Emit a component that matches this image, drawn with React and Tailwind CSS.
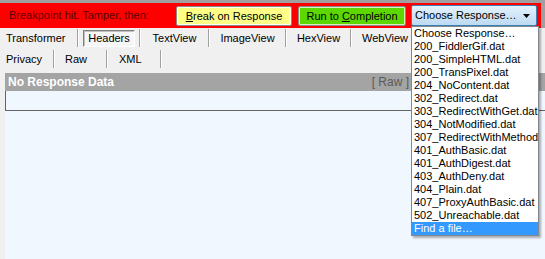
import { ChevronDown } from 'lucide-react';

const responses = [
  'Choose Response…',
  '200_FiddlerGif.dat',
  '200_SimpleHTML.dat',
  '200_TransPixel.dat',
  '204_NoContent.dat',
  '302_Redirect.dat',
  '303_RedirectWithGet.dat',
  '304_NotModified.dat',
  '307_RedirectWithMethod.dat',
  '401_AuthBasic.dat',
  '401_AuthDigest.dat',
  '403_AuthDeny.dat',
  '404_Plain.dat',
  '407_ProxyAuthBasic.dat',
  '502_Unreachable.dat',
];

const topTabs = [
  { label: 'Transformer', cls: 'w-[77px] pl-[6px] text-left' },
  { label: 'Headers', cls: 'w-[60px] text-center', active: true },
  { label: 'TextView', cls: 'w-[67px] text-center' },
  { label: 'ImageView', cls: 'w-[75px] text-center' },
  { label: 'HexView', cls: 'w-[63px] text-center' },
  { label: 'WebView', cls: 'w-[66px] text-center' },
];

const bottomTabs = [
  { label: 'Privacy', cls: 'w-[53px] pl-[6px]' },
  { label: 'Raw', cls: 'w-[51px] pl-[10px]' },
  { label: 'XML', cls: 'w-[52px] pl-[11px]' },
];

function Sep() {
  return <div className="w-[2px] self-stretch border-l border-[#a0a0a0] bg-white" />;
}

export default function App() {
  return (
    <div className="relative w-[545px] h-[259px] overflow-hidden bg-[#f0f0f0] font-['Liberation_Sans',Arial,sans-serif] text-[11px] text-black leading-none">
      {/* breakpoint bar */}
      <div className="bg-[#a0a0a0] pt-[3px] pr-[4px]">
        <div className="h-[25px] bg-[#ff0000] flex items-center">
          <span className="pl-[9px] w-[176px] text-[#5c0000]">Breakpoint hit. Tamper, then:</span>
          <button className="h-[20px] w-[116px] rounded-[2px] border border-[#8a8a8a] shadow-[inset_0_0_0_1px_#fffff0] bg-[#ffff88] text-center pt-[1px]">
            <span className="underline">B</span>reak on Response
          </button>
          <button className="ml-[6px] h-[20px] w-[108px] rounded-[2px] border border-[#8a8a8a] shadow-[inset_0_0_0_1px_#d8f0c0] bg-[#5cd800] text-center pt-[1px]">
            Run to <span className="underline">C</span>ompletion
          </button>
          <div className="ml-[5px] h-[21px] w-[126px] rounded-[2px] border border-[#3c7fb1] bg-gradient-to-b from-[#e4f2fc] to-[#bcdaf2] flex items-center pl-[3px] pr-[6px]">
            <span className="flex-1">Choose Response…</span>
            <svg width="7" height="4" viewBox="0 0 7 4"><path d="M0 0h7L3.5 4z" fill="#000" /></svg>
          </div>
        </div>
      </div>

      {/* tab rows */}
      <div className="flex h-[18px] items-center mt-[1px]">
        {topTabs.map(t => (
          <div key={t.label} className="flex h-full items-stretch">
            <div className={`${t.cls} flex items-center ${t.active ? 'justify-center' : ''}`}>
              {t.active ? (
                <div className="w-[52px] h-[17px] border border-t-[#808080] border-l-[#808080] border-b-white border-r-white shadow-[inset_1px_1px_0_#c0c0c0] bg-[#f6f6f6] flex items-center justify-center">
                  {t.label}
                </div>
              ) : (
                <span className="w-full">{t.label}</span>
              )}
            </div>
            <Sep />
          </div>
        ))}
      </div>
      <div className="flex h-[18px] items-center mt-[3px]">
        {bottomTabs.map(t => (
          <div key={t.label} className="flex h-full items-stretch">
            <div className={`${t.cls} flex items-center`}>{t.label}</div>
            <Sep />
          </div>
        ))}
      </div>

      {/* inspector body */}
      <div className="mt-[5px] pl-[5px]">
        <div className="h-[18px] bg-[#a4a4a4] flex items-center justify-between pl-[3px] pr-[136px]">
          <span className="text-white font-bold text-[12px]">No Response Data</span>
          <span className="text-[#5a5a5a] text-[12px]">[ Raw ]</span>
        </div>
        <div className="h-[20px] bg-[#f0f7ff] border-l border-b border-[#646464]" />
        <div className="h-[149px] bg-[#f0f7ff]" />
      </div>

      {/* dropdown list */}
      <div className="absolute left-[411px] top-[26px] w-[128px] bg-white border border-[#828790] shadow-[2px_2px_2px_rgba(0,0,0,0.3)]">
        {responses.map(r => (
          <div key={r} className="h-[13px] pl-[2px] flex items-center whitespace-nowrap overflow-hidden">{r}</div>
        ))}
        <div className="h-[13px] pl-[2px] flex items-center bg-[#3399ff] text-white">Find a file…</div>
      </div>
    </div>
  );
}
